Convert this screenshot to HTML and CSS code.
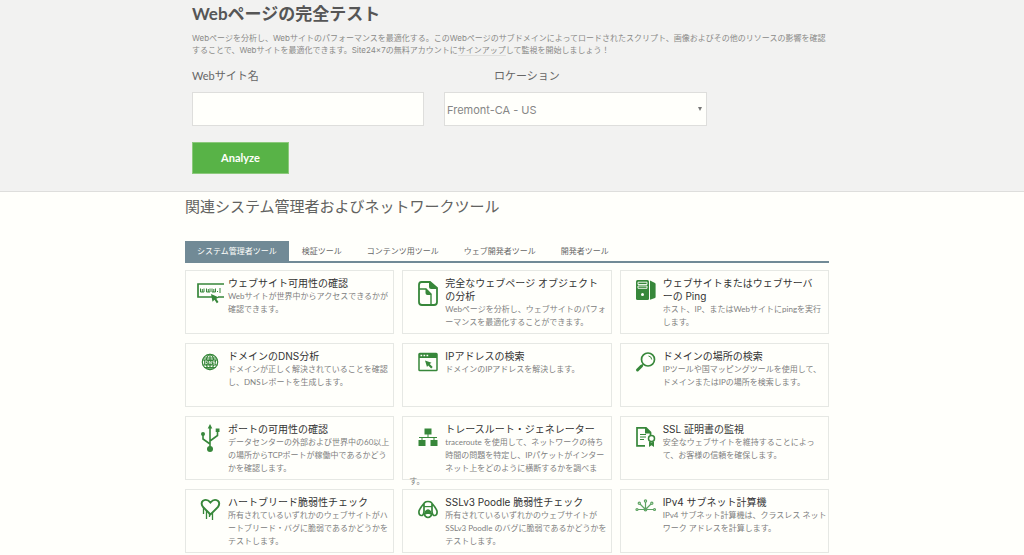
FILE: index.html
```html
<!DOCTYPE html>
<html lang="ja">
<head>
<meta charset="utf-8">
<meta name="viewport" content="width=device-width, initial-scale=1">
<title>Webページの完全テスト</title>
<link rel="stylesheet" href="styles.css">
</head>
<body>
<header class="band hero">
  <div class="band-inner hero-inner">
    <h1 class="page-title">Webページの完全テスト</h1>
    <p class="intro">Webページを分析し、Webサイトのパフォーマンスを最適化する。このWebページのサブドメインによってロードされたスクリプト、画像およびその他のリソースの影響を確認<br>することで、Webサイトを最適化できます。Site24x7の無料アカウントに<a class="signup" href="#">サインアップ</a>して監視を開始しましょう！</p>
    <form class="form">
      <div class="fields">
        <div class="field field-site">
          <label class="label" for="site">Webサイト名</label>
          <input class="control" id="site" type="text">
        </div>
        <div class="field field-location">
          <label class="label label-location" for="location">ロケーション</label>
          <div class="select-wrap">
            <select class="control select" id="location"><option>Fremont-CA - US</option></select>
            <svg class="arrow" viewBox="0 0 4 4" aria-hidden="true"><path d="M0 0h4L2 4z"/></svg>
          </div>
        </div>
      </div>
      <button class="analyze" type="button">Analyze</button>
    </form>
  </div>
</header>
<main class="band">
  <div class="band-inner">
    <h2 class="section-title">関連システム管理者およびネットワークツール</h2>
    <nav class="tabs">
      <button class="tab tab-active" type="button">システム管理者ツール</button>
      <button class="tab" type="button">検証ツール</button>
      <button class="tab" type="button">コンテンツ用ツール</button>
      <button class="tab" type="button">ウェブ開発者ツール</button>
      <button class="tab" type="button">開発者ツール</button>
    </nav>
    <div class="cards">
      <article class="card">
        <svg class="icon" viewBox="0 0 28 30"><path d="M28 7H2v13h14M22 20h6" fill="none" stroke="currentColor" stroke-width="1.7"/><path d="M4.500 11.500v3.500h3.500v-3.500M6.300 12v3M10.500 11.500v3.500H14v-3.500M12.300 12v3M16 11.500v3.500h3.500v-3.500M17.800 12v3M21 14.500h1M24 11v5" fill="none" stroke="currentColor"/><path d="M15 17l8 3.500-2.700 1.200 2.200 3.300-1.700 1.300-2.300-3.500-2 2z"/></svg>
        <h3 class="card-title">ウェブサイト可用性の確認</h3>
        <p class="card-text">Webサイトが世界中からアクセスできるかが<br>確認できます。</p>
      </article>
      <article class="card">
        <svg class="icon" viewBox="0 0 28 30"><path d="M17 5H8.500Q6 5 6 8v17q0 3 3 3h12q3 0 3-3V11z" fill="none" stroke="currentColor" stroke-width="1.800"/><path d="M16 4l8.500 8H18q-2 0-2-2z"/><path d="M6 12h7l5 5v11" fill="none" stroke="currentColor" stroke-width="1.400"/><path d="M12.500 11.500l6 6.500h-4q-2 0-2-2z"/></svg>
        <h3 class="card-title">完全なウェブページ オブジェクト<br>の分析</h3>
        <p class="card-text">Webページを分析し、ウェブサイトのパフォ<br>ーマンスを最適化することができます。</p>
      </article>
      <article class="card">
        <svg class="icon" viewBox="0 0 28 30"><rect x="5" y="3" width="13" height="20" rx="1.500"/><path d="M19 3.500l5 2.500q.6.400.6 1v13q0 .700-.6 1l-5 1.800z"/><path d="M7 5.200h9v2.300H7zM7 9h9v2.300H7z" fill="none" stroke="#fffffb" stroke-width=".9"/><circle cx="11.500" cy="17.500" r="1.500" fill="#fffffb"/></svg>
        <h3 class="card-title">ウェブサイトまたはウェブサーバ<br>ーの Ping</h3>
        <p class="card-text">ホスト、IP、またはWebサイトにpingを実行<br>します。</p>
      </article>
      <article class="card">
        <svg class="icon" viewBox="0 0 28 30"><g fill="none" stroke="currentColor" stroke-width="1.200"><circle cx="14" cy="12" r="7.700"/><ellipse cx="14" cy="12" rx="3.800" ry="7.700"/><path d="M14 4v16M7.500 8h13M6.500 10h15M6.500 15h15M8 17.500h12"/></g><path d="M8 9.800h12v5H8z"/><path d="M9.300 10.800v3q2.500 0 2.500-1.500t-2.500-1.500M13.300 14v-3l2 3v-3M19 11h-2v1.400h2V14h-2" fill="none" stroke="#fffffb" stroke-width=".7"/></svg>
        <h3 class="card-title">ドメインのDNS分析</h3>
        <p class="card-text">ドメインが正しく解決されていることを確認<br>し、DNSレポートを生成します。</p>
      </article>
      <article class="card">
        <svg class="icon" viewBox="0 0 28 30"><rect x="6" y="3.500" width="18" height="17" rx=".8" fill="none" stroke="currentColor" stroke-width="1.500"/><path d="M6 3.500h18V8H6z"/><path d="M7.500 5.500h1.700M10.500 5.500h1.700M13.500 5.500h1.700" stroke="#fffffb" stroke-width="1.300"/><path d="M12 10.500l6.500 2.200-1.800 1.300 3 3-1.500 1.400-3-3-1.200 1.700z"/></svg>
        <h3 class="card-title">IPアドレスの検索</h3>
        <p class="card-text">ドメインのIPアドレスを解決します。</p>
      </article>
      <article class="card">
        <svg class="icon" viewBox="0 0 28 30"><circle cx="17" cy="9.500" r="6.500" fill="none" stroke="currentColor" stroke-width="1.700"/><path d="M17.500 6q3 .300 3.200 3.500" fill="none" stroke="currentColor"/><path d="M12 14.500l-2 2" stroke="currentColor" stroke-width="1.600"/><path d="M10.500 16l-4 4" stroke="currentColor" stroke-width="3" stroke-linecap="round"/></svg>
        <h3 class="card-title">ドメインの場所の検索</h3>
        <p class="card-text">IPツールや国マッピングツールを使用して、<br>ドメインまたはIPの場所を検索します。</p>
      </article>
      <article class="card">
        <svg class="icon" viewBox="0 0 28 30"><path d="M14 25V4M14 21l-7-5v-5M14 18l7.500-5.500V8" fill="none" stroke="currentColor" stroke-width="1.600"/><path d="M14 1l2.300 4.500h-4.600zM19.700 5.500h3.800V9h-3.800z"/><circle cx="7" cy="11" r="2"/><circle cx="14" cy="26" r="3"/></svg>
        <h3 class="card-title">ポートの可用性の確認</h3>
        <p class="card-text">データセンターの外部および世界中の60以上<br>の場所からTCPポートが稼働中であるかどう<br>かを確認します。</p>
      </article>
      <article class="card">
        <svg class="icon" viewBox="0 0 28 30"><path d="M11.500 5.500h7v6h-7zM5.500 17h7v6h-7zM17.500 17h7v6h-7z"/><path d="M15 11v3.500M6 14.500h18M9 14.500V17M21 14.500V17" fill="none" stroke="currentColor"/></svg>
        <h3 class="card-title">トレースルート・ジェネレーター</h3>
        <p class="card-text">traceroute を使用して、ネットワークの待ち<br>時間の問題を特定し、IPパケットがインター<br>ネット上をどのように横断するかを調べま<br>す。</p>
      </article>
      <article class="card">
        <svg class="icon" viewBox="0 0 28 30"><path d="M14 22.800H6V4.800h9l4.500 4.500V12" fill="none" stroke="currentColor" stroke-width="1.700"/><path d="M14 4l6.500 6.500H14z"/><path d="M9 11.500h6M9 14h6M9 16.500h4" stroke="currentColor"/><circle cx="20.500" cy="15.500" r="3" fill="none" stroke="currentColor" stroke-width="1.500"/><path d="M18 18.500l2.500 1 2.500-1V24l-2.500-1.800L18 24z"/></svg>
        <h3 class="card-title">SSL 証明書の監視</h3>
        <p class="card-text">安全なウェブサイトを維持することによっ<br>て、お客様の信頼を確保します。</p>
      </article>
      <article class="card">
        <svg class="icon" viewBox="0 0 28 30"><path d="M14.500 18.500L7 11Q4.300 7 7 4.800q3.800-2.500 7.500 1.700Q18 2.300 21.800 4.800 24.500 7 22 11z" fill="none" stroke="currentColor" stroke-width="1.900"/><path d="M7.500 11v7M10.500 14v9M13.500 17v4M16.500 16.500V24" stroke="currentColor" stroke-width="1.300"/></svg>
        <h3 class="card-title">ハートブリード脆弱性チェック</h3>
        <p class="card-text">所有されているいずれかのウェブサイトがハ<br>ートブリード・バグに脆弱であるかどうかを<br>テストします。</p>
      </article>
      <article class="card">
        <svg class="icon" viewBox="0 0 28 30"><g fill="none" stroke="currentColor" stroke-width="1.700"><path d="M10.500 9.500Q10.500 5.500 15 5.500t4.500 4M10.500 8Q7 12 6 15q-.5 4 2 4.500 2.500.300 3-4V8M19.500 8q3.500 4 4.500 7 .5 4-2 4.500-2.500.300-3-4V8"/><path d="M11 17q1 4.500 4 4.500t4-4.500"/></g><path d="M12 15q3-3.500 6 0l1 3q-2 1-2.500 0h-3q-.5 1-2.500 0z"/><path d="M11 10h8v1.200h-8z"/></svg>
        <h3 class="card-title">SSLv3 Poodle 脆弱性チェック</h3>
        <p class="card-text">所有されているいずれかのウェブサイトが<br>SSLv3 Poodle のバグに脆弱であるかどうかを<br>テストします。</p>
      </article>
      <article class="card">
        <svg class="icon icon-light" viewBox="0 0 28 30"><g fill="none" stroke="currentColor" stroke-width="1.200"><path d="M7 13.500h15M14.500 13V6M14 13L9 8M15 13l5-5"/><circle cx="6" cy="13.500" r="1"/><circle cx="23.500" cy="13.500" r="1"/><circle cx="8.300" cy="7.300" r="1.100"/><circle cx="20.800" cy="7.300" r="1.100"/><circle cx="14.500" cy="5" r="1.100"/><circle cx="14.500" cy="13.500" r="1.300"/></g></svg>
        <h3 class="card-title">IPv4 サブネット計算機</h3>
        <p class="card-text">IPv4 サブネット計算機は、クラスレス ネット<br>ワーク アドレスを計算します。</p>
      </article>
    </div>
  </div>
</main>
</body>
</html>
```
FILE: styles.css
```css
* {
  box-sizing: border-box;
}

body {
  margin: 0;
  background: #fffffb;
  color: #555;
  font-family: Lato, "Noto Sans CJK JP", sans-serif;
  font-size: 8px;
}

h1, h2, h3, p {
  margin: 0;
}

button, input, select {
  font-family: inherit;
}

.band {
  display: grid;
  grid-template-columns: 185fr 644fr 195fr;
}

.band-inner {
  grid-column: 2;
  min-width: 0;
}

.hero {
  background: #f2f2f1;
  border-bottom: 1px solid #dededc;
}

.hero-inner {
  padding: 4px 0 17px 7px;
}

.page-title {
  font-size: 17px;
  line-height: 20px;
  font-weight: 700;
  color: #565656;
  white-space: nowrap;
}

.intro {
  margin-top: 8px;
  font-family: Inter, "Noto Sans CJK JP", sans-serif;
  line-height: 12px;
  color: #8a8a88;
  white-space: nowrap;
}

.signup {
  color: inherit;
  text-decoration: none;
  border-bottom: 1px solid #e0e0de;
}

.form {
  margin-top: 12px;
}

.fields {
  display: flex;
  gap: 20px;
}

.field-site {
  flex: 0 1 232px;
}

.field-location {
  flex: 0 1 263px;
}

.label {
  display: block;
  font-size: 11px;
  line-height: 16px;
  color: #666;
}

.label-location {
  padding-left: 50px;
}

.control {
  display: block;
  width: 100%;
  height: 34px;
  margin-top: 8px;
  border: 1px solid #dededc;
  border-radius: 0;
  background: #fffffb;
}

.select-wrap {
  position: relative;
}

.select {
  appearance: none;
  padding: 2px 2px 0;
  font-family: Inter, sans-serif;
  font-size: 11px;
  color: #868686;
}

.arrow {
  position: absolute;
  right: 5px;
  top: 15px;
  width: 4px;
  height: 4px;
  fill: #777;
}

.analyze {
  display: block;
  width: 97px;
  height: 32px;
  margin-top: 16px;
  padding: 0 0 2px;
  border: 1px solid #8cc97c;
  background: #58b347;
  color: #fffffb;
  font-size: 11px;
  font-weight: 700;
}

.section-title {
  padding: 4px 0 25px;
  font-size: 15px;
  line-height: 20px;
  font-weight: 400;
  color: #626260;
}

.tabs {
  display: flex;
  gap: 1px;
  border-bottom: 2px solid #718a96;
}

.tab {
  height: 20px;
  padding: 0 12px 2px;
  border: 0;
  background: none;
  font-size: 8px;
  color: #666;
  white-space: nowrap;
}

.tab-active {
  background: #718a96;
  color: #fffffb;
}

.cards {
  display: grid;
  grid-template-columns: repeat(3, minmax(0, 1fr));
  gap: 9px 8px;
  margin-top: 7px;
}

.card {
  height: 64px;
  padding: 6px 0 0 6px;
  border: 1px solid #e6e8e4;
  white-space: nowrap;
}

.icon {
  float: left;
  width: 28px;
  height: 30px;
  margin: 0 4px 20px;
  color: #37873a;
  fill: currentColor;
}

.icon-light {
  color: #5fa463;
}

.card-title {
  font-family: Inter, "Noto Sans CJK JP", sans-serif;
  font-size: 10px;
  line-height: 13px;
  font-weight: 400;
  color: #333;
}

.card-text {
  line-height: 13px;
  color: #808080;
}
```
